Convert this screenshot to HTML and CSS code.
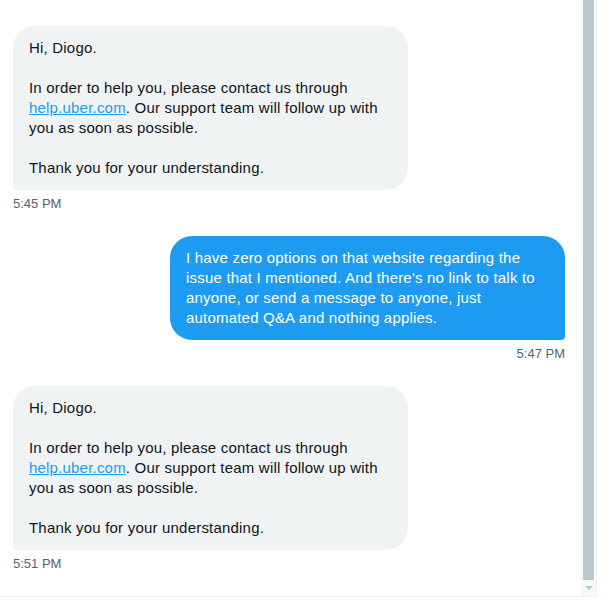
FILE: index.html
```html
<!DOCTYPE html>
<html>
<head>
<meta charset="utf-8">
<link rel="stylesheet" href="styles.css">
</head>
<body>
<div class="frame">
  <div class="chat">
    <div class="msg msg-in">
      <div class="bubble bubble-in">
        <p>Hi, Diogo.</p>
        <p class="gap">In order to help you, please contact us through <a href="#">help.uber.com</a>. Our support team will follow up with you as soon as possible.</p>
        <p class="gap">Thank you for your understanding.</p>
      </div>
      <div class="time">5:45 PM</div>
    </div>
    <div class="msg msg-out">
      <div class="bubble bubble-out">
        <p>I have zero options on that website regarding the issue that I mentioned. And there's no link to talk to anyone, or send a message to anyone, just automated Q&amp;A and nothing applies.</p>
      </div>
      <div class="time">5:47 PM</div>
    </div>
    <div class="msg msg-in">
      <div class="bubble bubble-in">
        <p>Hi, Diogo.</p>
        <p class="gap">In order to help you, please contact us through <a href="#">help.uber.com</a>. Our support team will follow up with you as soon as possible.</p>
        <p class="gap">Thank you for your understanding.</p>
      </div>
      <div class="time">5:51 PM</div>
    </div>
  </div>
  <div class="scrollbar">
    <div class="thumb"></div>
    <div class="arrow"></div>
  </div>
</div>
</body>
</html>
```
FILE: styles.css
```css
html, body {
  margin: 0;
  padding: 0;
  background: #ffffff;
}
.frame {
  width: 596px;
  height: 596px;
  display: flex;
  border-right: 1px solid #eff3f4;
  border-bottom: 1px solid #eff3f4;
  overflow: hidden;
}
.chat {
  flex: 1;
  display: flex;
  flex-direction: column;
  gap: 24px;
  padding: 26px 16px 0 13px;
}
.msg {
  display: flex;
  flex-direction: column;
}
.msg-in { align-items: flex-start; }
.msg-out { align-items: flex-end; }
.bubble {
  width: 395px;
  box-sizing: border-box;
  padding: 12px 16px;
  font-family: "Liberation Sans", Arial, sans-serif;
  font-size: 15px;
  line-height: 20px;
  letter-spacing: 0.2px;
}
.bubble p { margin: 0; }
.bubble p.gap { margin-top: 20px; }
.bubble-in {
  background: #eff3f4;
  color: #0f1419;
  border-radius: 22px 22px 22px 4px;
}
.bubble-out {
  background: #1d9bf0;
  color: #ffffff;
  border-radius: 22px 22px 4px 22px;
}
.bubble a {
  color: #1d9bf0;
  text-decoration: underline;
}
.time {
  margin-top: 6px;
  font-family: "Liberation Sans", Arial, sans-serif;
  font-size: 13px;
  line-height: 16px;
  color: #536471;
}
.scrollbar {
  width: 15px;
  background: #f7f9f9;
  display: flex;
  flex-direction: column;
  align-items: center;
}
.thumb {
  width: 11px;
  height: 580px;
  background: #b9c8d0;
}
.arrow {
  margin-top: 6px;
  width: 0;
  height: 0;
  border-left: 4px solid transparent;
  border-right: 4px solid transparent;
  border-top: 4px solid #b9c8d0;
}
```
